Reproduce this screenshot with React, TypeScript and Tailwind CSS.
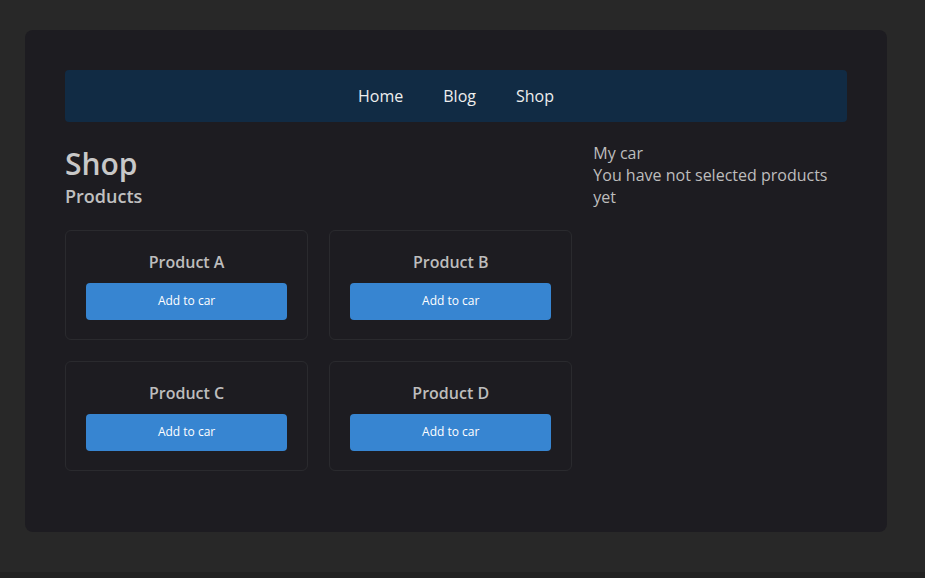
import React from 'react';

const products = ['Product A', 'Product B', 'Product C', 'Product D'];

export default function App() {
    const [cart, setCart] = React.useState<string[]>([]);

    return (
        <div className="min-h-screen bg-[#222222] font-['Open_Sans',sans-serif]">
            <div className="h-[572px] bg-[#282828] px-[25px] pt-[30px]">
                <div className="h-[502px] w-[862px] rounded-lg bg-[#1d1c21] p-10">
                    <nav className="flex h-[52px] items-center justify-center gap-10 rounded-sm bg-[#112b44] text-[16px] text-[#eeeeee]">
                        <a href="#">Home</a>
                        <a href="#">Blog</a>
                        <a href="#">Shop</a>
                    </nav>
                    <div className="mt-[20px] grid grid-cols-[2fr_1fr] gap-[21px]">
                        <div>
                            <h1 className="mt-1 text-[30px] font-semibold leading-[36px] text-[#c8c8c8]">Shop</h1>
                            <h2 className="text-[18px] font-semibold leading-[28px] text-[#c0c0c0]">Products</h2>
                            <div className="mt-5 grid grid-cols-2 gap-[21px]">
                                {products.map(p => (
                                    <div
                                        key={p}
                                        className="flex h-[110px] flex-col items-center justify-center rounded-md border border-[#2a2a2e] px-5"
                                    >
                                        <h3 className="text-[16px] font-semibold leading-[22px] text-[#bdbdbd]">{p}</h3>
                                        <button
                                            onClick={() => setCart([...cart, p])}
                                            className="mt-[10px] h-[37px] w-full rounded-sm bg-[#3785d1] text-[12px] text-white"
                                        >
                                            Add to car
                                        </button>
                                    </div>
                                ))}
                            </div>
                        </div>
                        <div className="pr-[10px] text-[16px] leading-[22px] text-[#bdbdbd]">
                            <p>My car</p>
                            {cart.length === 0 ? (
                                <p>You have not selected products yet</p>
                            ) : (
                                cart.map((c, i) => <p key={i}>{c}</p>)
                            )}
                        </div>
                    </div>
                </div>
            </div>
        </div>
    );
}
